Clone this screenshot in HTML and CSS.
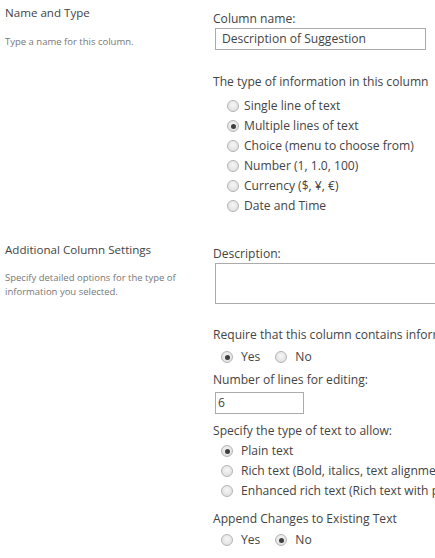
FILE: index.html
```html
<!DOCTYPE html>
<html>
<head>
<meta charset="utf-8">
<link rel="stylesheet" href="styles.css">
</head>
<body>
<div class="section s1">
  <div class="left">
    <div class="title">Name and Type</div>
    <div class="desc d1">Type a name for this column.</div>
  </div>
  <div class="right">
    <div class="label">Column name:</div>
    <div class="input name-input">Description of Suggestion</div>
    <div class="label type-label">The type of information in this column</div>
    <div class="options types">
      <div class="opt"><span class="radio"></span>Single line of text</div>
      <div class="opt"><span class="radio on"></span>Multiple lines of text</div>
      <div class="opt"><span class="radio"></span>Choice (menu to choose from)</div>
      <div class="opt"><span class="radio"></span>Number (1, 1.0, 100)</div>
      <div class="opt"><span class="radio"></span>Currency ($, ¥, €)</div>
      <div class="opt"><span class="radio"></span>Date and Time</div>
    </div>
  </div>
</div>
<div class="section s2">
  <div class="left">
    <div class="title">Additional Column Settings</div>
    <div class="desc d2">Specify detailed options for the type of information you selected.</div>
  </div>
  <div class="right">
    <div class="label">Description:</div>
    <div class="textarea"></div>
    <div class="label req-label">Require that this column contains information:</div>
    <div class="inline-opts yn1">
      <div class="opt"><span class="radio on"></span>Yes</div>
      <div class="opt"><span class="radio"></span>No</div>
    </div>
    <div class="label lines-label">Number of lines for editing:</div>
    <div class="input lines-input">6</div>
    <div class="label text-label">Specify the type of text to allow:</div>
    <div class="options texttypes">
      <div class="opt"><span class="radio on"></span>Plain text</div>
      <div class="opt"><span class="radio"></span>Rich text (Bold, italics, text alignment, hyperlinks)</div>
      <div class="opt"><span class="radio"></span>Enhanced rich text (Rich text with pictures, tables, and hyperlinks)</div>
    </div>
    <div class="label append-label">Append Changes to Existing Text</div>
    <div class="inline-opts yn2">
      <div class="opt"><span class="radio"></span>Yes</div>
      <div class="opt"><span class="radio on"></span>No</div>
    </div>
  </div>
</div>
</body>
</html>
```

FILE: styles.css
```css
html, body {
  margin: 0;
  padding: 0;
  background: #fff;
  overflow: hidden;
}
body {
  font-family: "Open Sans", "Noto Sans", sans-serif;
  font-size: 12.1px;
  color: #444;
  width: 435px;
  height: 558px;
}
.section {
  display: flex;
}
.left {
  width: 208px;
  flex: none;
  padding-left: 5px;
  box-sizing: border-box;
}
.right {
  flex: 1;
  min-width: 0;
  padding-left: 5px;
  white-space: nowrap;
  overflow: hidden;
}
.title {
  font-size: 11.6px;
  line-height: 18px;
  color: #444;
}
.desc {
  font-size: 9.5px;
  line-height: 14px;
  color: #777;
  white-space: normal;
}
.s1 .title { margin-top: 4px; }
.d1 { margin-top: 13px; }
.s1 .right { padding-top: 10px; }
.label {
  line-height: 18px;
  color: #444;
}
.input {
  margin-left: 2px;
  height: 22px;
  box-sizing: border-box;
  border: 1px solid #ababab;
  line-height: 20px;
  padding-left: 6px;
  color: #444;
  background: #fff;
}
.name-input {
  width: 211px;
}
.type-label { margin-top: 23px; }
.options .opt, .inline-opts .opt {
  display: flex;
  align-items: center;
  height: 20px;
  line-height: 20px;
}
.types { margin-top: 5px; }
.types .opt { padding-left: 14px; }
.types .radio { margin-right: 5px; }
.radio {
  display: inline-block;
  flex: none;
  width: 12px;
  height: 12px;
  box-sizing: border-box;
  border-radius: 50%;
  border: 1px solid #b4b4b4;
  background: radial-gradient(circle at 50% 40%, #f6f6f6 0%, #dadada 100%);
  position: relative;
}
.radio.on::after {
  content: "";
  position: absolute;
  left: 2.5px;
  top: 2.5px;
  width: 5px;
  height: 5px;
  border-radius: 50%;
  background: #3f3f3f;
}
.s2 { margin-top: 29px; }
.s2 .title { margin-top: -4px; }
.d2 { margin-top: 12px; }
.s2 .right { padding-top: 0; }
.textarea {
  margin-left: 2px;
  margin-top: 0;
  height: 41px;
  width: 260px;
  box-sizing: border-box;
  border: 1px solid #ababab;
  background: #fff;
}
.req-label { margin-top: 22px; }
.inline-opts {
  display: flex;
  padding-left: 8px;
}
.inline-opts .opt { margin-right: 15px; }
.inline-opts .radio { margin-right: 8px; }
.yn1 { margin-top: 3px; }
.lines-label { margin-top: 4px; }
.lines-input {
  width: 89px;
  margin-top: 3px;
  padding-left: 2px;
}
.text-label { margin-top: 8px; }
.texttypes { margin-top: 1px; }
.texttypes .opt { padding-left: 8px; }
.texttypes .radio { margin-right: 8px; }
.append-label { margin-top: 9px; }
.yn2 { margin-top: 2px; }
```
